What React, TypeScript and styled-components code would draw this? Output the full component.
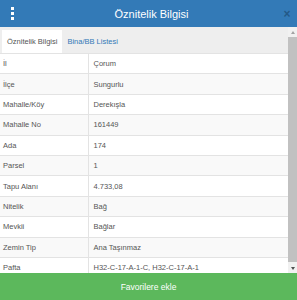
import React from 'react'
import styled, { createGlobalStyle } from 'styled-components'

const GlobalStyle = createGlobalStyle`
  html, body {
    margin: 0;
    padding: 0;
    background: #ffffff;
    font-family: 'Liberation Sans', Arial, sans-serif;
  }
`

const Panel = styled.div`
  width: 297px;
  height: 300px;
  display: flex;
  flex-direction: column;
  overflow: hidden;
`

const Header = styled.div`
  height: 27px;
  flex: none;
  display: flex;
  align-items: center;
  background-color: #337ab7;
  color: #ffffff;
`

const MenuButton = styled.div`
  width: 24px;
  display: flex;
  flex-direction: column;
  align-items: center;
  gap: 2px;
  span {
    width: 3px;
    height: 3px;
    background: #ffffff;
  }
`

const Title = styled.div`
  flex: 1;
  text-align: center;
  font-size: 11px;
  padding-left: 2px;
`

const CloseButton = styled.div`
  width: 20px;
  text-align: center;
  font-size: 12px;
  font-weight: bold;
  color: #1e4e78;
  opacity: 0.75;
`

const Body = styled.div`
  flex: 1;
  min-height: 0;
  display: flex;
  background: #eeeeee;
`

const Content = styled.div`
  flex: 1;
  overflow: hidden;
`

const ScrollTrack = styled.div`
  width: 9px;
  flex: none;
  display: flex;
  flex-direction: column;
  align-items: center;
  background: #f1f1f1;
`

const Arrow = styled.div<{ $down?: boolean }>`
  height: 10px;
  flex: none;
  display: flex;
  align-items: center;
  justify-content: center;
  &::before {
    content: '';
    border-left: 2.5px solid transparent;
    border-right: 2.5px solid transparent;
    ${({ $down }) =>
      $down ? 'border-top: 3px solid #505050;' : 'border-bottom: 3px solid #a3a3a3;'}
  }
`

const Thumb = styled.div`
  flex: 1;
  width: 9px;
  background: #c1c1c1;
  margin-bottom: 1px;
`

const Tabs = styled.div`
  display: flex;
  padding: 3px 0 0 2px;
  height: 23px;
`

const Tab = styled.div<{ $active?: boolean }>`
  display: flex;
  align-items: center;
  padding: 0 5px;
  font-size: 7.5px;
  background: ${({ $active }) => ($active ? '#ffffff' : 'transparent')};
  color: ${({ $active }) => ($active ? '#555555' : '#337ab7')};
`

const Table = styled.table`
  width: 100%;
  border-collapse: collapse;
  background: #ffffff;
  font-size: 7.5px;
  color: #555555;
  tr:nth-child(even) td {
    background: #f9f9f9;
  }
`

const Cell = styled.td<{ $label?: boolean }>`
  height: 20.4px;
  padding: 0 ${({ $label }) => ($label ? '3px' : '5px')};
  border-top: 1px solid #e3e3e3;
  box-sizing: border-box;
  white-space: nowrap;
  width: ${({ $label }) => ($label ? '88px' : 'auto')};
  border-right: ${({ $label }) => ($label ? '1px solid #e3e3e3' : 'none')};
`

const Footer = styled.div`
  height: 27px;
  flex: none;
  display: flex;
  align-items: center;
  justify-content: center;
  background: #5cb85c;
  color: #ffffff;
  font-size: 8.5px;
`

const rows: [string, string][] = [
  ['İl', 'Çorum'],
  ['İlçe', 'Sungurlu'],
  ['Mahalle/Köy', 'Derekışla'],
  ['Mahalle No', '161449'],
  ['Ada', '174'],
  ['Parsel', '1'],
  ['Tapu Alanı', '4.733,08'],
  ['Nitelik', 'Bağ'],
  ['Mevkii', 'Bağlar'],
  ['Zemin Tip', 'Ana Taşınmaz'],
  ['Pafta', 'H32-C-17-A-1-C, H32-C-17-A-1'],
]

const App = () => {
  return (
    <>
      <GlobalStyle />
      <Panel>
        <Header>
          <MenuButton>
            <span />
            <span />
            <span />
          </MenuButton>
          <Title>Öznitelik Bilgisi</Title>
          <CloseButton>×</CloseButton>
        </Header>
        <Body>
          <Content>
            <Tabs>
              <Tab $active>Öznitelik Bilgisi</Tab>
              <Tab>Bina/BB Listesi</Tab>
            </Tabs>
            <Table>
              <tbody>
                {rows.map(([label, value]) => (
                  <tr key={label}>
                    <Cell $label>{label}</Cell>
                    <Cell>{value}</Cell>
                  </tr>
                ))}
              </tbody>
            </Table>
          </Content>
          <ScrollTrack>
            <Arrow />
            <Thumb />
            <Arrow $down />
          </ScrollTrack>
        </Body>
        <Footer>Favorilere ekle</Footer>
      </Panel>
    </>
  )
}

export default App
